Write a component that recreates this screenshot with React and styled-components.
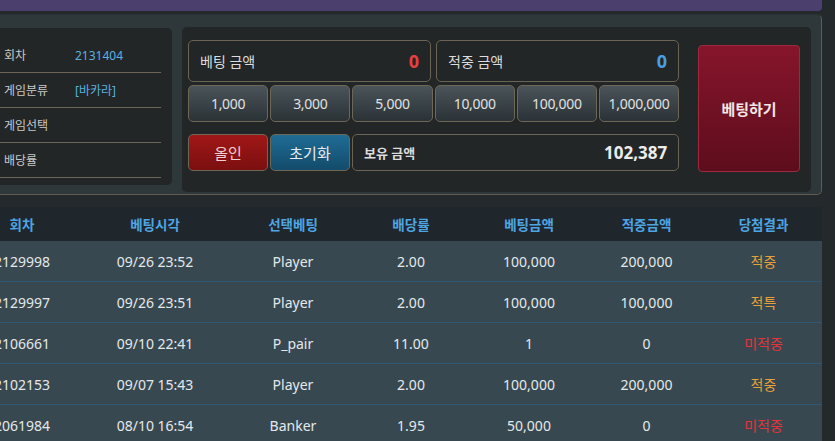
import React from "react";
import styled, { createGlobalStyle, css } from "styled-components";

const GlobalStyle = createGlobalStyle`
  html, body { margin: 0; padding: 0; background: #24292b; }
  body { font-family: "Noto Sans", "Noto Sans CJK KR", sans-serif; overflow: hidden; }
`;

const Page = styled.div`
  width: 835px;
  height: 441px;
  overflow: hidden;
`;

const Shift = styled.div`
  margin-left: -32px;
  width: 854px;
`;

const TopBar = styled.div`
  height: 11px;
  background: #4b406d;
  border-bottom-right-radius: 4px;
`;

const OuterPanel = styled.div`
  margin-top: 3px;
  height: 181px;
  box-sizing: border-box;
  background: #2e3739;
  border: 1px solid #625b50;
  border-left: none;
  border-top-color: #2a3133;
  border-radius: 0 5px 5px 0;
  display: flex;
  align-items: flex-start;
  gap: 10px;
  padding: 12px 10px 0 12px;
`;

const InfoPanel = styled.div`
  width: 192px;
  height: 157px;
  margin-top: 1px;
  box-sizing: border-box;
  background: #222627;
  border-radius: 5px;
  padding: 10px 11px 0 0;
  display: flex;
  flex-direction: column;
`;

const InfoRow = styled.div`
  height: 34px;
  border-bottom: 1px solid #6d6555;
  display: flex;
  align-items: center;
  font-size: 12px;
  padding-left: 24px;
`;

const InfoLabel = styled.span`
  width: 71px;
  color: #c9c9c9;
`;

const InfoValue = styled.span`
  color: #5cb1e0;
`;

const BetPanel = styled.div`
  width: 629px;
  height: 165px;
  box-sizing: border-box;
  background: #222627;
  border-radius: 5px;
  padding: 13px 11px 0 6px;
  display: flex;
  gap: 19px;
`;

const Controls = styled.div`
  width: 492px;
  display: flex;
  flex-direction: column;
`;

const AmountRow = styled.div`
  display: grid;
  grid-template-columns: 1fr 1fr;
  gap: 5px;
`;

const AmountBox = styled.div`
  height: 42px;
  box-sizing: border-box;
  border: 1px solid #6b6354;
  border-radius: 5px;
  background: #222627;
  display: flex;
  align-items: center;
  justify-content: space-between;
  padding: 0 11px 0 11px;
`;

const AmountLabel = styled.span`
  color: #dcdcdc;
  font-weight: ${(p) => (p.$bold ? 700 : 400)};
  font-size: ${(p) => (p.$bold ? "13px" : "14px")};
`;

const AmountValue = styled.span`
  font-weight: 700;
  font-size: ${(p) => p.$size || "18px"};
  color: ${(p) => p.$color};
`;

const ChipRow = styled.div`
  margin-top: 3px;
  display: grid;
  grid-template-columns: repeat(6, 1fr);
  gap: 2px;
`;

const btnBase = css`
  height: 37px;
  box-sizing: border-box;
  border: 1px solid #6f6756;
  border-radius: 5px;
  display: flex;
  align-items: center;
  justify-content: center;
  color: #e0e0e0;
  font-size: 14px;
  font-family: "Noto Sans", "Noto Sans CJK KR", sans-serif;
  padding: 0;
  cursor: pointer;
`;

const ChipButton = styled.button`
  ${btnBase};
  background: linear-gradient(#4a5459, #2a3236);
  letter-spacing: -0.3px;
`;

const ActionRow = styled.div`
  margin-top: 12px;
  display: grid;
  grid-template-columns: 80px 80px 1fr;
  gap: 2px;
`;

const ActionButton = styled.button`
  ${btnBase};
  font-size: 15px;
  background: ${(p) =>
    p.$tone === "red"
      ? "linear-gradient(#a11717, #7b0f10)"
      : "linear-gradient(#1f6c95, #134b6b)"};
  color: ${(p) => (p.$tone === "red" ? "#f0d0d0" : "#e6eef3")};
`;

const BalanceBox = styled(AmountBox)`
  height: 37px;
`;

const BetButton = styled.button`
  margin-top: 5px;
  width: 102px;
  height: 127px;
  box-sizing: border-box;
  border: 1px solid #9b2b3c;
  border-radius: 4px;
  background: linear-gradient(#86152b, #5d0d1d);
  color: #f2e6e6;
  font-size: 15px;
  font-weight: 700;
  font-family: "Noto Sans", "Noto Sans CJK KR", sans-serif;
  cursor: pointer;
`;

const Table = styled.div`
  margin-top: 12px;
  width: 854px;
`;

const cols = "108px 158px 118px 118px 118px 117px 117px";

const HeadRow = styled.div`
  display: grid;
  grid-template-columns: ${cols};
  height: 34px;
  align-items: center;
  background: #1f262c;
`;

const HeadCell = styled.div`
  text-align: center;
  color: #4ea5e2;
  font-size: 13.5px;
  font-weight: 700;
`;

const BodyRow = styled.div`
  display: grid;
  grid-template-columns: ${cols};
  height: 41px;
  box-sizing: border-box;
  align-items: center;
  background: #384850;
  border-bottom: 1px solid #2e5873;
`;

const Cell = styled.div`
  text-align: center;
  color: ${(p) => p.$color || "#e4e8ea"};
  font-size: 14px;
`;

const info = [
  ["회차", "2131404"],
  ["게임분류", "[바카라]"],
  ["게임선택", ""],
  ["배당률", ""],
];

const chips = ["1,000", "3,000", "5,000", "10,000", "100,000", "1,000,000"];

const headers = ["회차", "베팅시각", "선택베팅", "배당률", "베팅금액", "적중금액", "당첨결과"];

const rows = [
  ["2129998", "09/26 23:52", "Player", "2.00", "100,000", "200,000", "적중"],
  ["2129997", "09/26 23:51", "Player", "2.00", "100,000", "100,000", "적특"],
  ["2106661", "09/10 22:41", "P_pair", "11.00", "1", "0", "미적중"],
  ["2102153", "09/07 15:43", "Player", "2.00", "100,000", "200,000", "적중"],
  ["2061984", "08/10 16:54", "Banker", "1.95", "50,000", "0", "미적중"],
];

const resultColor = (r) => (r === "미적중" ? "#e2353b" : "#e6a23a");

export default function App() {
  return (
    <Page>
      <GlobalStyle />
      <Shift>
        <TopBar />
        <OuterPanel>
          <InfoPanel>
            {info.map(([k, v]) => (
              <InfoRow key={k}>
                <InfoLabel>{k}</InfoLabel>
                <InfoValue>{v}</InfoValue>
              </InfoRow>
            ))}
          </InfoPanel>
          <BetPanel>
            <Controls>
              <AmountRow>
                <AmountBox>
                  <AmountLabel>베팅 금액</AmountLabel>
                  <AmountValue $color="#e8403f">0</AmountValue>
                </AmountBox>
                <AmountBox>
                  <AmountLabel>적중 금액</AmountLabel>
                  <AmountValue $color="#4a9fe3">0</AmountValue>
                </AmountBox>
              </AmountRow>
              <ChipRow>
                {chips.map((c) => (
                  <ChipButton key={c}>{c}</ChipButton>
                ))}
              </ChipRow>
              <ActionRow>
                <ActionButton $tone="red">올인</ActionButton>
                <ActionButton $tone="blue">초기화</ActionButton>
                <BalanceBox>
                  <AmountLabel $bold>보유 금액</AmountLabel>
                  <AmountValue $color="#ececec" $size="17px">102,387</AmountValue>
                </BalanceBox>
              </ActionRow>
            </Controls>
            <BetButton>베팅하기</BetButton>
          </BetPanel>
        </OuterPanel>
        <Table>
          <HeadRow>
            {headers.map((h) => (
              <HeadCell key={h}>{h}</HeadCell>
            ))}
          </HeadRow>
          {rows.map((r) => (
            <BodyRow key={r[0]}>
              {r.map((c, i) => (
                <Cell key={i} $color={i === 6 ? resultColor(c) : undefined}>
                  {c}
                </Cell>
              ))}
            </BodyRow>
          ))}
        </Table>
      </Shift>
    </Page>
  );
}
